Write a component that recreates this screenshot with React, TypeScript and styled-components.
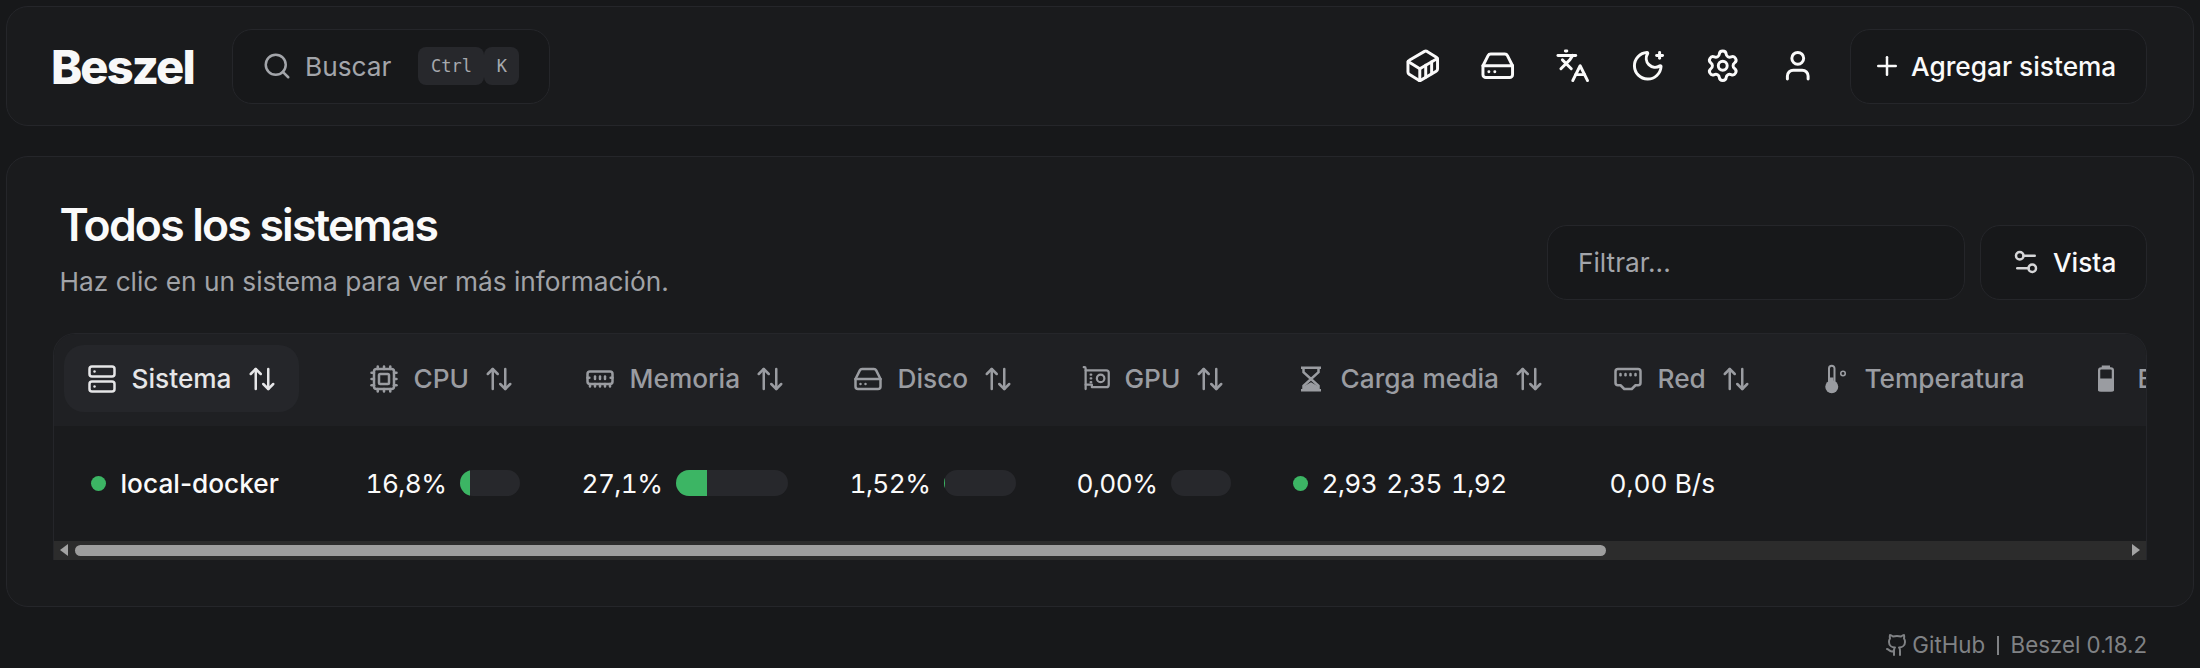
import React from "react";
import styled, { createGlobalStyle } from "styled-components";
import {
  ArrowUpDown,
  Container,
  Cpu,
  EthernetPort,
  HardDrive,
  Languages,
  MemoryStick,
  MoonStar,
  Plus,
  Search,
  Server,
  Settings,
  Settings2,
  User,
} from "lucide-react";

const GlobalStyle = createGlobalStyle`
  html, body {
    margin: 0;
    background: #17181a;
    color: #fafafa;
    font-family: Inter, "Noto Sans", sans-serif;
  }
  * { box-sizing: border-box; }
`;

const Page = styled.div`
  width: 2200px;
  height: 668px;
  overflow: hidden;
  padding: 6px 6px 0;
`;

const Card = styled.div`
  background: #1a1b1d;
  border: 1.5px solid #25262a;
  border-radius: 22px;
`;

const Navbar = styled(Card)`
  height: 120px;
  display: flex;
  align-items: center;
  padding: 0 46px 0 44px;
`;

const Logo = styled.span`
  font-size: 47px;
  font-weight: 800;
  letter-spacing: -1.9px;
  line-height: 1;
  width: 181px;
  color: #f8f8f8;
`;

const Outlined = styled.div`
  height: 75px;
  display: flex;
  align-items: center;
  background: #17181a;
  border: 1.5px solid #25262a;
  border-radius: 20px;
`;

const SearchBox = styled(Outlined)`
  width: 318px;
  padding-left: 29px;
  color: #a3a5aa;
  font-size: 26.25px;
  svg { margin-right: 13px; }
`;

const Keys = styled.div`
  display: flex;
  margin-left: 27px;
`;

const Key = styled.kbd<{ $wide?: boolean }>`
  width: ${(p) => (p.$wide ? "66px" : "35px")};
  height: 38px;
  display: flex;
  align-items: center;
  justify-content: center;
  background: #27282c;
  border-radius: 8px;
  color: #a6a9ae;
  font-family: "DejaVu Sans Mono", monospace;
  font-size: 17px;
`;

const NavRight = styled.div`
  margin-left: auto;
  display: flex;
  align-items: center;
`;

const IconButton = styled.div`
  width: 75px;
  height: 75px;
  display: flex;
  align-items: center;
  justify-content: center;
  color: #fafafa;
`;

const TextButton = styled(Outlined)`
  color: #fafafa;
  font-size: 26.25px;
  font-weight: 500;
`;

const AddButton = styled(TextButton)`
  width: 297px;
  margin-left: 15px;
  padding-left: 21px;
  gap: 9px;
`;

const ViewButton = styled(TextButton)`
  width: 167px;
  padding-left: 30px;
  gap: 12px;
  svg { color: #d6d6d8; }
`;

const MainCard = styled(Card)`
  height: 451px;
  margin-top: 30px;
  padding: 41px 46px 0;
`;

const TopRow = styled.div`
  display: flex;
  align-items: flex-start;
  justify-content: space-between;
  height: 134.5px;
`;

const Heading = styled.div`
  padding-left: 6.5px;
`;

const Title = styled.h1`
  margin: 0;
  font-size: 44.5px;
  line-height: 54px;
  font-weight: 600;
  letter-spacing: -1.8px;
`;

const Subtitle = styled.p`
  margin: 11px 0 0;
  font-size: 26.25px;
  line-height: 38px;
  color: #a1a3a8;
`;

const Filters = styled.div`
  display: flex;
  gap: 15px;
  margin-top: 26.5px;
`;

const FilterInput = styled(Outlined)`
  width: 418px;
  padding-left: 30px;
  color: #a3a5aa;
  font-size: 26.25px;
`;

const TableWrap = styled.div`
  height: 227px;
  border: 1.5px solid #25262a;
  border-bottom: 0;
  border-radius: 22px 22px 0 0;
  overflow: hidden;
  display: flex;
  flex-direction: column;
`;

const columns = "29.5px 282px 216px 268px 227px 216px 317px 207px 273px 200px";

const HeadRow = styled.div`
  height: 92px;
  flex: none;
  display: grid;
  grid-template-columns: ${columns};
  align-items: center;
  padding-bottom: 2px;
  background: #1f2023;
`;

const BodyRow = styled.div`
  flex: 1;
  display: grid;
  grid-template-columns: ${columns};
  align-items: center;
  font-size: 26.25px;
  font-weight: 400;
  color: #fafafa;
`;

const HeadCell = styled.div<{ $active?: boolean }>`
  grid-column: ${(p) => (p.$active ? "2" : "auto")};
  display: flex;
  align-items: center;
  gap: 15px;
  padding-left: 3px;
  height: 33px;
  font-size: 26.25px;
  font-weight: 500;
  white-space: nowrap;
  color: ${(p) => (p.$active ? "#e6e6e8" : "#9a9ca1")};
  position: relative;
  &::before {
    content: ${(p) => (p.$active ? '""' : "none")};
    position: absolute;
    left: -20px;
    top: -17px;
    width: 235px;
    height: 67px;
    background: #25262a;
    border-radius: 20px;
  }
  > * { position: relative; flex: none; }
`;

const NameCell = styled.div`
  grid-column: 2;
  display: flex;
  align-items: center;
  gap: 15px;
  padding-left: 7px;
  font-weight: 500;
`;

const Dot = styled.span`
  width: 15px;
  height: 15px;
  border-radius: 50%;
  background: #3cb564;
  flex: none;
`;

const Numeric = styled.span`
  font-variant-numeric: tabular-nums;
  letter-spacing: -0.6px;
`;

const MeterCell = styled.div`
  display: flex;
  align-items: center;
  gap: 14px;
`;

const Meter = styled.div<{ $width: number }>`
  width: ${(p) => p.$width}px;
  height: 26px;
  border-radius: 13px;
  background: #27282c;
  overflow: hidden;
`;

const MeterFill = styled.div`
  height: 100%;
  background: #3cb564;
`;

const LoadCell = styled.div`
  display: flex;
  align-items: center;
  gap: 14px;
`;

const LoadValues = styled.div`
  display: flex;
  gap: 9px;
`;

const NetValue = styled.div`
  font-variant-numeric: tabular-nums;
`;

const ScrollBar = styled.div`
  height: 19px;
  flex: none;
  display: flex;
  align-items: center;
  background: #2c2c2c;
  padding: 0 6px;
`;

const Thumb = styled.div`
  width: 1531px;
  height: 11px;
  margin-left: 7px;
  border-radius: 6px;
  background: #9e9e9e;
`;

const Arrow = styled.span<{ $right?: boolean }>`
  width: 0;
  height: 0;
  border-top: 6px solid transparent;
  border-bottom: 6px solid transparent;
  ${(p) => (p.$right ? "border-left: 8px solid #a3a3a3; margin-left: auto;" : "border-right: 8px solid #a3a3a3;")}
`;

const Footer = styled.footer`
  display: flex;
  justify-content: flex-end;
  align-items: center;
  padding: 23px 47px 0 0;
  font-size: 22.3px;
  color: #808285;
  line-height: 30px;
`;

const FooterLink = styled.span`
  display: flex;
  align-items: center;
  gap: 3px;
`;

const Separator = styled.span`
  width: 1.5px;
  height: 19px;
  margin: 0 12px;
  background: #808285;
`;

const GithubIcon = () => (
  <svg width="24" height="24" viewBox="0 0 24 24" fill="none" stroke="currentColor" strokeWidth="2" strokeLinecap="round" strokeLinejoin="round">
    <path d="M15 22v-4a4.8 4.8 0 0 0-1-3.5c3 0 6-2 6-5.5.08-1.25-.27-2.48-1-3.5.28-1.15.28-2.35 0-3.5 0 0-1 0-3 1.5-2.64-.5-5.36-.5-8 0C6 2 5 2 5 2c-.3 1.15-.3 2.35 0 3.5A5.403 5.403 0 0 0 4 9c0 3.5 3 5.5 6 5.5-.39.49-.68 1.05-.85 1.65-.17.6-.22 1.23-.15 1.85v4" />
    <path d="M9 18c-4.51 2-5-2-7-2" />
  </svg>
);

const GpuIcon = () => (
  <svg width="30" height="30" viewBox="0 0 24 24" fill="none" stroke="currentColor" strokeWidth="1.8" strokeLinecap="round" strokeLinejoin="round">
    <path d="M3 2.5h.5a1 1 0 0 1 1 1V20" />
    <path d="M4.5 5H21a2 2 0 0 1 2 2v9.5a2 2 0 0 1-2 2H9.5v-2h-5" />
    <circle cx="16.5" cy="11.5" r="3" />
    <path d="M8.5 8.5h.5M8.5 11.5h.5M8.5 14.5h.5" />
  </svg>
);

const HourglassIcon = () => (
  <svg width="30" height="30" viewBox="0 0 24 24" fill="none" stroke="currentColor" strokeWidth="2">
    <path d="M4 3h16M4 21h16" />
    <path d="M6 3v3.5l12 11V21M18 3v3.5l-12 11V21" />
    <path d="M6 21v-3l6-3.5 6 3.5v3z" fill="currentColor" stroke="none" />
  </svg>
);

const ThermometerIcon = () => (
  <svg width="30" height="30" viewBox="0 0 24 24" fill="none" stroke="currentColor" strokeWidth="1.6" strokeLinecap="round">
    <path d="M7.2 14V3.6a2.2 2.2 0 0 1 4.4 0V14" />
    <circle cx="9.4" cy="18.2" r="5.2" fill="currentColor" stroke="none" />
    <path d="M8 10.8h2.8V14H8z" fill="currentColor" stroke="none" />
    <circle cx="18.4" cy="7.6" r="1.8" strokeWidth="1.3" />
  </svg>
);

const BatteryIcon = () => (
  <svg width="30" height="30" viewBox="0 0 24 24" fill="none" stroke="currentColor" strokeWidth="1.8" strokeLinejoin="round">
    <path d="M7 1.2h6.6v2.6H7z" fill="currentColor" stroke="none" />
    <rect x="4.9" y="3.4" width="11" height="17.6" rx="1.6" />
    <path d="M4.9 12.4h11V21H4.9z" fill="currentColor" />
  </svg>
);

const Sort = () => <ArrowUpDown size={30} strokeWidth={2} />;

export default function App() {
  return (
    <Page>
      <GlobalStyle />
      <Navbar>
        <Logo>Beszel</Logo>
        <SearchBox>
          <Search size={30} strokeWidth={2} />
          Buscar
          <Keys>
            <Key $wide>Ctrl</Key>
            <Key>K</Key>
          </Keys>
        </SearchBox>
        <NavRight>
          <IconButton><Container size={35.5} /></IconButton>
          <IconButton><HardDrive size={35.5} /></IconButton>
          <IconButton><Languages size={35.5} /></IconButton>
          <IconButton><MoonStar size={35.5} /></IconButton>
          <IconButton><Settings size={35.5} /></IconButton>
          <IconButton><User size={35.5} /></IconButton>
          <AddButton><Plus size={30} />Agregar sistema</AddButton>
        </NavRight>
      </Navbar>

      <MainCard>
        <TopRow>
          <Heading>
            <Title>Todos los sistemas</Title>
            <Subtitle>Haz clic en un sistema para ver más información.</Subtitle>
          </Heading>
          <Filters>
            <FilterInput>Filtrar...</FilterInput>
            <ViewButton><Settings2 size={30} />Vista</ViewButton>
          </Filters>
        </TopRow>

        <TableWrap>
          <HeadRow>
            <HeadCell $active><Server size={30} /><span>Sistema</span><Sort /></HeadCell>
            <HeadCell><Cpu size={30} /><span>CPU</span><Sort /></HeadCell>
            <HeadCell><MemoryStick size={30} /><span>Memoria</span><Sort /></HeadCell>
            <HeadCell><HardDrive size={30} /><span>Disco</span><Sort /></HeadCell>
            <HeadCell><GpuIcon /><span>GPU</span><Sort /></HeadCell>
            <HeadCell><HourglassIcon /><span>Carga media</span><Sort /></HeadCell>
            <HeadCell><EthernetPort size={30} /><span>Red</span><Sort /></HeadCell>
            <HeadCell><ThermometerIcon /><span>Temperatura</span></HeadCell>
            <HeadCell><BatteryIcon /><span>Batería</span></HeadCell>
          </HeadRow>
          <BodyRow>
            <NameCell><Dot />local-docker</NameCell>
            <MeterCell><Numeric>16,8%</Numeric><Meter $width={60}><MeterFill style={{ width: "16.8%" }} /></Meter></MeterCell>
            <MeterCell><Numeric>27,1%</Numeric><Meter $width={112}><MeterFill style={{ width: "27.1%" }} /></Meter></MeterCell>
            <MeterCell><Numeric>1,52%</Numeric><Meter $width={72}><MeterFill style={{ width: "1.52%" }} /></Meter></MeterCell>
            <MeterCell><Numeric>0,00%</Numeric><Meter $width={60} /></MeterCell>
            <LoadCell>
              <Dot />
              <LoadValues><Numeric>2,93</Numeric><Numeric>2,35</Numeric><Numeric>1,92</Numeric></LoadValues>
            </LoadCell>
            <NetValue>0,00 B/s</NetValue>
          </BodyRow>
          <ScrollBar>
            <Arrow />
            <Thumb />
            <Arrow $right />
          </ScrollBar>
        </TableWrap>
      </MainCard>

      <Footer>
        <FooterLink><GithubIcon />GitHub</FooterLink>
        <Separator />
        <span>Beszel 0.18.2</span>
      </Footer>
    </Page>
  );
}
